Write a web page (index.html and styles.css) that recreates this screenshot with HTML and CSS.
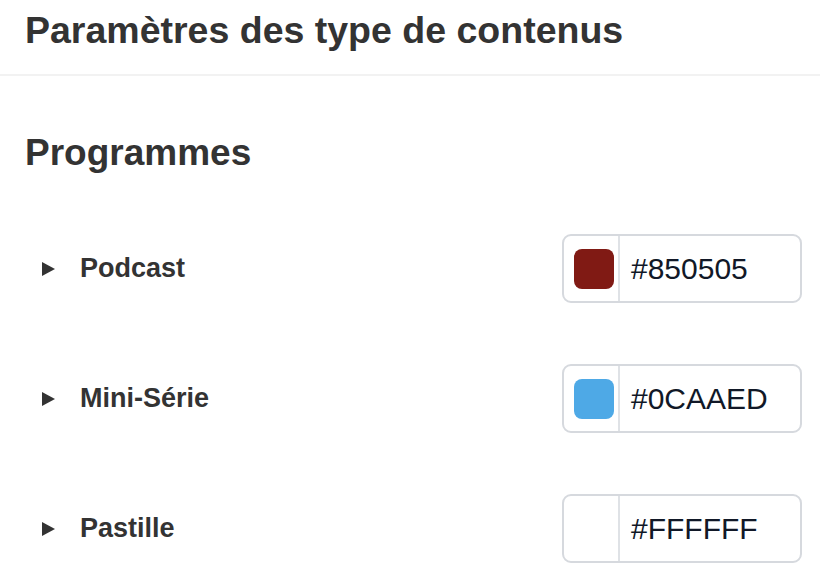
FILE: index.html
```html
<!DOCTYPE html>
<html lang="fr">
<head>
<meta charset="utf-8">
<title>Paramètres des type de contenus</title>
<link rel="stylesheet" href="styles.css">
</head>
<body>
<header class="page-header">
  <h1 class="page-title">Paramètres des type de contenus</h1>
</header>
<main class="content">
  <h2 class="section-title">Programmes</h2>
  <div class="rows">
    <div class="row">
      <span class="caret"></span>
      <span class="label">Podcast</span>
      <div class="color-field">
        <div class="swatch-cell"><span class="swatch" style="background:#801a14"></span></div>
        <div class="hex">#850505</div>
      </div>
    </div>
    <div class="row">
      <span class="caret"></span>
      <span class="label">Mini-Série</span>
      <div class="color-field">
        <div class="swatch-cell"><span class="swatch" style="background:#4ea9e6"></span></div>
        <div class="hex">#0CAAED</div>
      </div>
    </div>
    <div class="row">
      <span class="caret"></span>
      <span class="label">Pastille</span>
      <div class="color-field">
        <div class="swatch-cell"><span class="swatch" style="background:#ffffff"></span></div>
        <div class="hex">#FFFFFF</div>
      </div>
    </div>
  </div>
</main>
</body>
</html>
```

FILE: styles.css
```css
html, body {
  margin: 0;
  padding: 0;
  background: #ffffff;
}
body {
  font-family: "Liberation Sans", Arial, sans-serif;
  color: #333333;
}
.page-header {
  height: 76px;
  box-sizing: border-box;
  padding: 12px 25px 0;
  border-bottom: 2px solid #f2f2f2;
}
.page-title {
  margin: 0;
  font-size: 37.5px;
  line-height: 37px;
  font-weight: bold;
  color: #333333;
}
.content {
  padding: 58px 18px 0 25px;
}
.section-title {
  margin: 0;
  font-size: 37px;
  line-height: 37px;
  font-weight: bold;
  color: #333333;
}
.rows {
  display: flex;
  flex-direction: column;
  gap: 61px;
  margin-top: 63px;
}
.row {
  display: flex;
  align-items: center;
  padding-left: 17px;
}
.caret {
  width: 0;
  height: 0;
  border-top: 7px solid transparent;
  border-bottom: 7px solid transparent;
  border-left: 13px solid #333333;
  margin-top: 1px;
}
.label {
  margin-left: 25px;
  font-size: 27px;
  font-weight: bold;
  color: #333333;
  margin-top: -1px;
}
.color-field {
  margin-left: auto;
  display: flex;
  width: 240px;
  height: 69px;
  box-sizing: border-box;
  border: 2px solid #d6d9de;
  border-radius: 9px;
  background: #ffffff;
}
.swatch-cell {
  width: 56px;
  display: flex;
  align-items: center;
  padding-left: 10px;
  box-sizing: border-box;
  border-right: 2px solid #dfe2e6;
}
.swatch {
  display: block;
  width: 40px;
  height: 40px;
  border-radius: 8px;
}
.hex {
  display: flex;
  align-items: center;
  padding-left: 11px;
  font-size: 30px;
  color: #111827;
}
```
